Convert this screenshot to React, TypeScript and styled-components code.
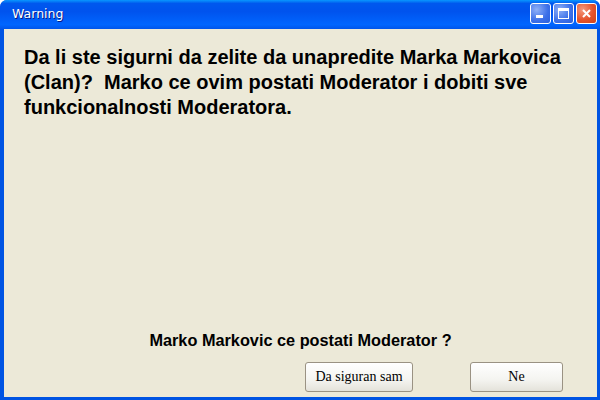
import styled, { createGlobalStyle } from 'styled-components';

const GlobalStyle = createGlobalStyle`
  html, body {
    margin: 0;
    padding: 0;
    width: 600px;
    height: 400px;
    overflow: hidden;
  }
`;

const Window = styled.div`
  width: 600px;
  height: 400px;
  box-sizing: border-box;
  display: flex;
  flex-direction: column;
  background: #0054e3;
  border-radius: 7px 7px 0 0;
  overflow: hidden;
`;

const TitleBar = styled.div`
  height: 29px;
  flex-shrink: 0;
  display: flex;
  align-items: center;
  justify-content: space-between;
  padding: 0 3px 0 12px;
  background: linear-gradient(
    to bottom,
    #0997ff 0%,
    #0058ee 12%,
    #0053ee 40%,
    #0066ff 85%,
    #0055ea 100%
  );
`;

const Title = styled.span`
  font-family: Tahoma, 'DejaVu Sans', 'Liberation Sans', sans-serif;
  font-size: 12.5px;
  font-weight: normal;
  color: #fff;
  text-shadow: 1px 1px 0 #0a1883;
  margin-top: -2px;
`;

const Controls = styled.div`
  display: flex;
  gap: 2px;
  margin-top: -2px;
`;

const ControlButton = styled.div<{ $close?: boolean }>`
  width: 21px;
  height: 21px;
  box-sizing: border-box;
  border: 1px solid #fff;
  border-radius: 3px;
  display: flex;
  align-items: center;
  justify-content: center;
  background: ${(p) =>
    p.$close
      ? 'radial-gradient(circle at 30% 30%, #f49a7e 0%, #e5532c 55%, #cc4419 100%)'
      : 'radial-gradient(circle at 30% 30%, #8fb0f7 0%, #3b6fe8 60%, #2a5fdc 100%)'};
`;

const Body = styled.div`
  flex: 1;
  margin: 0 3px 3px 4px;
  background: #ece9d8;
  display: flex;
  flex-direction: column;
  padding: 16px 20px 5px 20px;
  box-sizing: border-box;
`;

const Message = styled.p`
  margin: 0;
  font-family: Arial, 'Liberation Sans', sans-serif;
  font-weight: bold;
  font-size: 20px;
  line-height: 25px;
  color: #000;
`;

const Question = styled.p`
  margin: auto 0 12px;
  text-align: center;
  font-family: Arial, 'Liberation Sans', sans-serif;
  font-weight: bold;
  font-size: 16.3px;
  color: #000;
`;

const Actions = styled.div`
  display: flex;
  justify-content: flex-end;
  gap: 57px;
  padding-right: 14px;
`;

const Button = styled.button<{ $width: number }>`
  width: ${(p) => p.$width}px;
  height: 30px;
  border: 1px solid #9a9283;
  border-radius: 3px;
  background: linear-gradient(to bottom, #ffffff 0%, #f4f4f0 60%, #e4e2da 100%);
  font-family: 'Liberation Serif', 'Times New Roman', serif;
  font-size: 14px;
  color: #000;
  padding: 0;
`;

const Minimize = () => (
  <svg width="11" height="11" viewBox="0 0 11 11">
    <rect x="1" y="7" width="7" height="3" fill="#fff" />
  </svg>
);

const Maximize = () => (
  <svg width="13" height="13" viewBox="0 0 13 13">
    <rect x="1.5" y="1.5" width="10" height="10" fill="none" stroke="#fff" />
    <rect x="1" y="1" width="11" height="3" fill="#fff" />
  </svg>
);

const Close = () => (
  <svg width="11" height="11" viewBox="0 0 11 11">
    <path d="M2 2 L9 9 M9 2 L2 9" stroke="#fff" strokeWidth="2" />
  </svg>
);

export default function App() {
  return (
    <>
      <GlobalStyle />
      <Window>
        <TitleBar>
          <Title>Warning</Title>
          <Controls>
            <ControlButton>
              <Minimize />
            </ControlButton>
            <ControlButton>
              <Maximize />
            </ControlButton>
            <ControlButton $close>
              <Close />
            </ControlButton>
          </Controls>
        </TitleBar>
        <Body>
          <Message>
            Da li ste sigurni da zelite da unapredite Marka Markovica (Clan)?&nbsp; Marko ce
            ovim postati Moderator i dobiti sve funkcionalnosti Moderatora.
          </Message>
          <Question>Marko Markovic ce postati Moderator ?</Question>
          <Actions>
            <Button $width={108}>Da siguran sam</Button>
            <Button $width={93}>Ne</Button>
          </Actions>
        </Body>
      </Window>
    </>
  );
}
